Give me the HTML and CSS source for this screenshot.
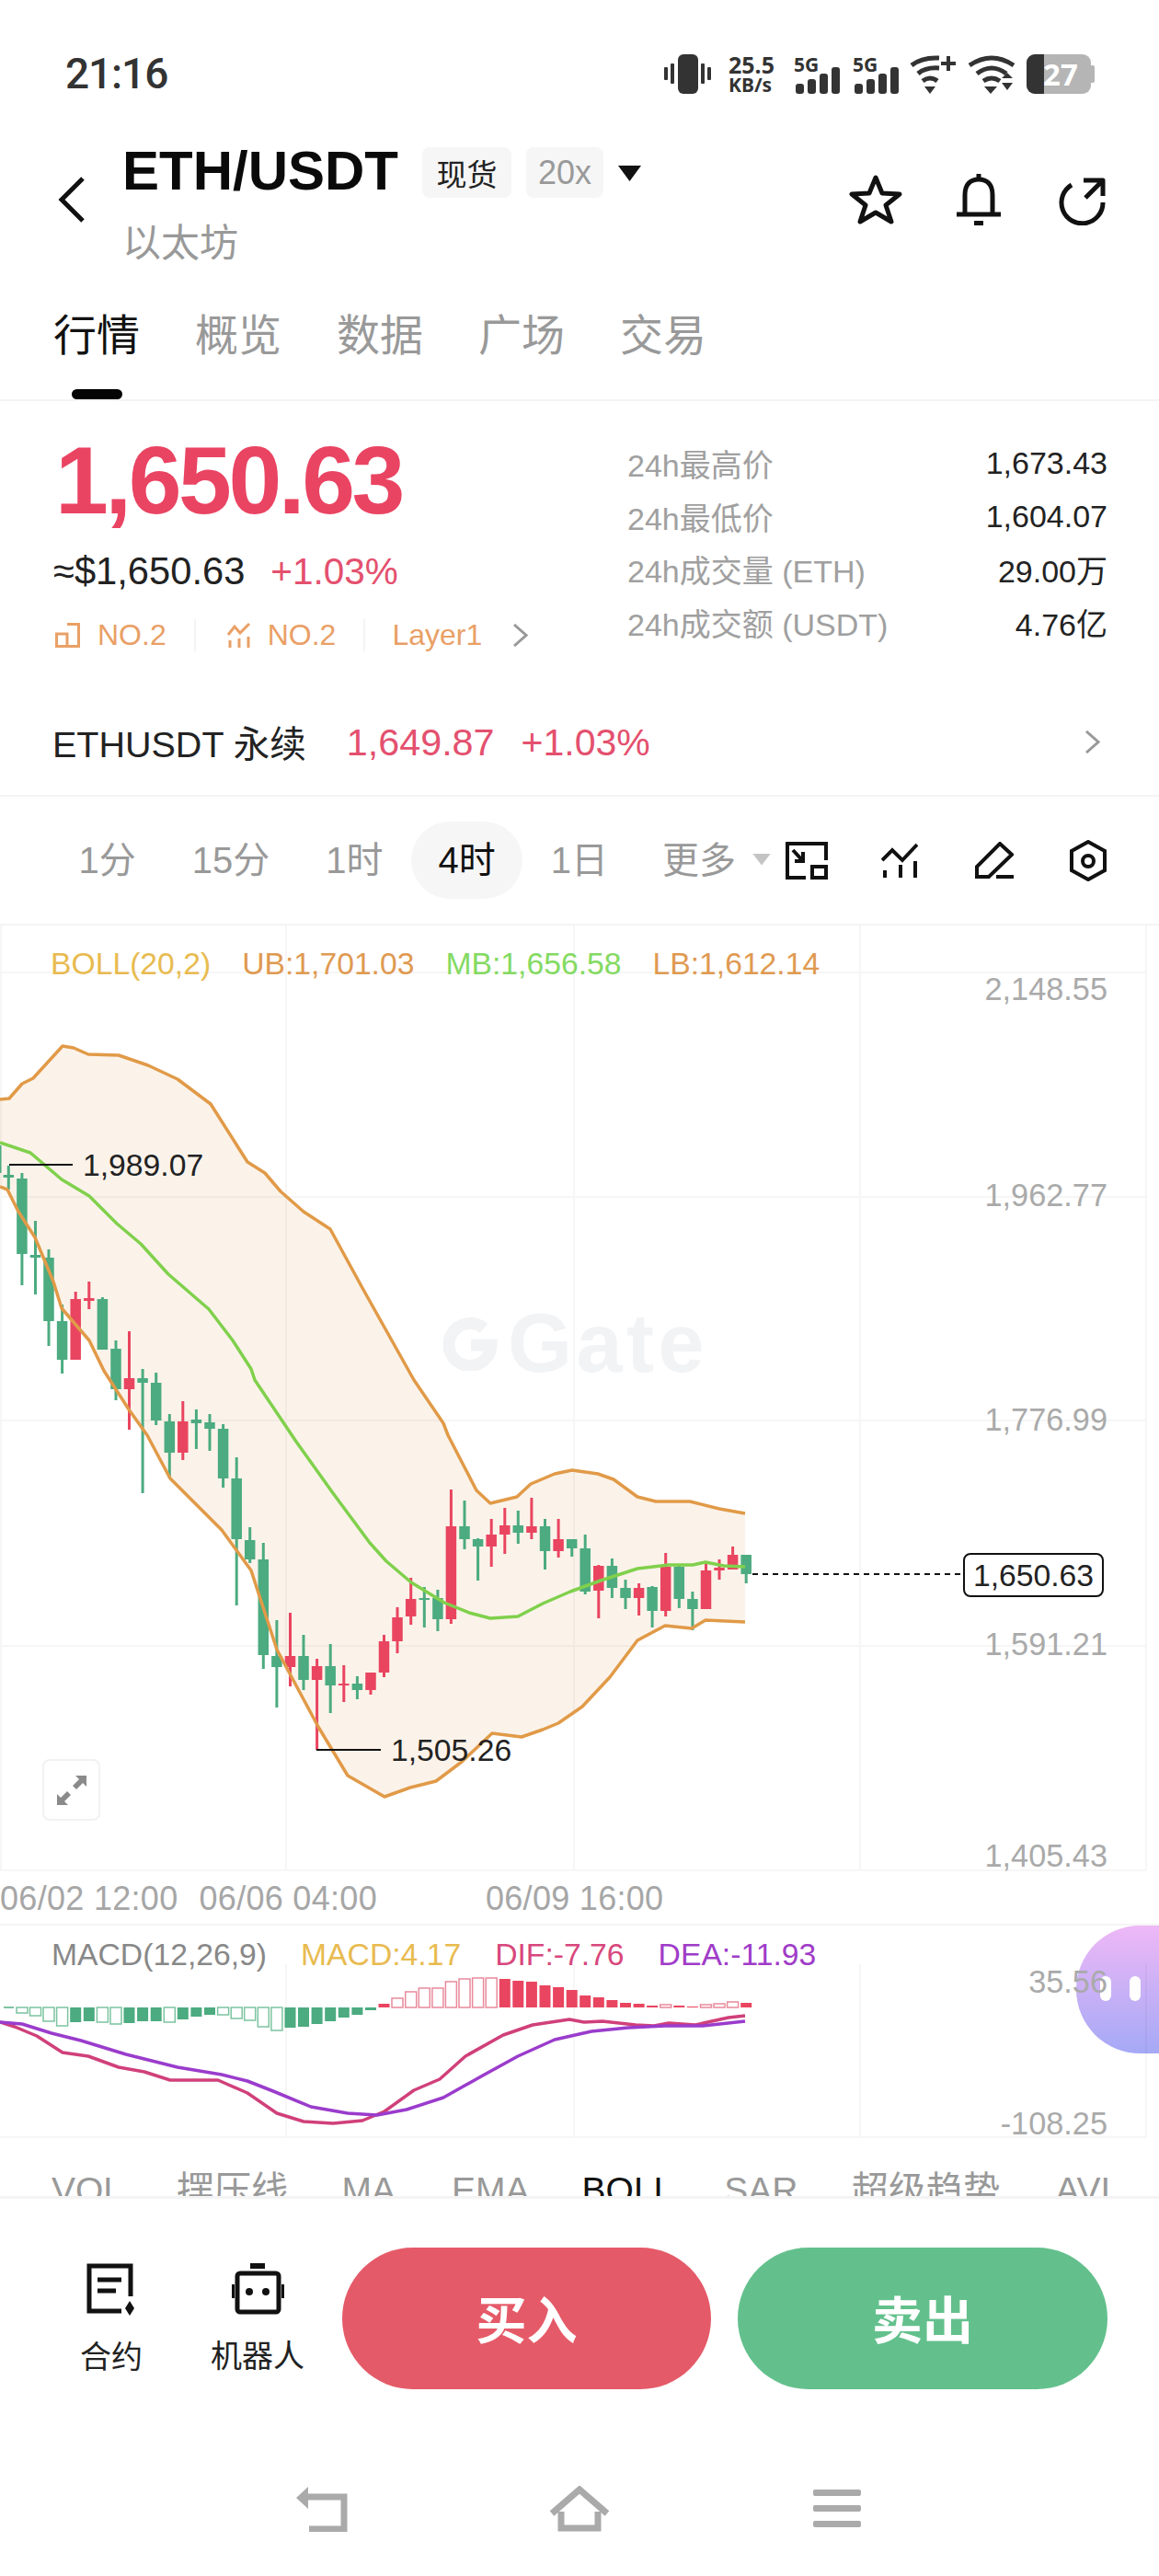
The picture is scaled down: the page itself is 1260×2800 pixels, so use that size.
FILE: index.html
```html
<!DOCTYPE html>
<html lang="zh">
<head>
<meta charset="utf-8">
<title>ETH/USDT</title>
<link rel="stylesheet" href="styles.css">
</head>
<body>
<div class="page">
  <div class="status">
    <div class="time">21:16</div>
    <div class="sys">
      <svg class="s-vib" viewBox="0 0 51 43"><rect x="15" y="0" width="22" height="43" rx="6"/><rect x="0" y="14" width="4" height="14" rx="1"/><rect x="7" y="10" width="4" height="22" rx="1"/><rect x="40" y="10" width="4" height="22" rx="1"/><rect x="47" y="14" width="4" height="14" rx="1"/></svg>
      <div class="speed"><span>25.5</span><span class="speed-u">KB/s</span></div>
      <div class="sig"><span class="t5g">5G</span><svg class="s-sig" viewBox="0 0 50 43"><rect x="2" y="32" width="9" height="11" rx="3"/><rect x="15" y="27" width="9" height="16" rx="3"/><rect x="28" y="21" width="9" height="22" rx="3"/><rect x="41" y="14" width="9" height="29" rx="3"/></svg></div>
      <div class="sig sig2"><span class="t5g">5G</span><svg class="s-sig" viewBox="0 0 50 43"><rect x="2" y="32" width="9" height="11" rx="3"/><rect x="15" y="27" width="9" height="16" rx="3"/><rect x="28" y="21" width="9" height="22" rx="3"/><rect x="41" y="14" width="9" height="29" rx="3"/></svg></div>
      <svg class="s-wifi" viewBox="0 0 50 43"><g class="wf"><path d="M2 12Q13 3 32 4"/><path d="M9 21Q17 14 32 15"/><path d="M14 29Q22 23 30 29"/><path class="wf-thin" d="M42 2V18M34 10H50"/></g><path d="M16 35H28L22 43Z"/></svg>
      <svg class="s-wifi s-wifi2" viewBox="0 0 53 43"><g class="wf"><path d="M2 12Q26 -4 50 12"/><path d="M10 21Q26 9 42 21"/><path d="M17 29Q26 23 35 29"/></g><path d="M18 35H32L25 43Z"/><path d="M37 26H49L43 20ZM37 31H49L43 39Z"/></svg>
      <div class="batt"><i class="batt-d"></i><span class="batt-t">27</span></div>
    </div>
  </div>

  <header class="head">
    <svg class="back" viewBox="0 0 30 50"><path d="M27 2L4 25L27 48"/></svg>
    <div class="title-col">
      <div class="title-row">
        <h1 class="pair">ETH/USDT</h1>
        <span class="tag tag-spot">现货</span>
        <span class="tag tag-lev">20x</span>
        <span class="drop"></span>
      </div>
      <div class="coin">以太坊</div>
    </div>
    <div class="head-ic">
      <svg class="i-star" viewBox="0 0 58 55"><path d="M29 4L36 21L55 22L40 34L46 52L29 42L12 52L18 34L3 22L22 21Z"/></svg>
      <svg class="i-bell" viewBox="0 0 48 57"><path d="M9 44V24C9 12 15 7 24 7C33 7 39 12 39 24V44"/><path d="M24 1V7M0 45H48"/><rect class="fill" x="19" y="52" width="10" height="5"/></svg>
      <svg class="i-share" viewBox="0 0 52 52"><path d="M15 8A22.500 22.500 0 1 0 49 27"/><path d="M28 3H49V20M49 3L30 22"/></svg>
    </div>
  </header>

  <nav class="tabs">
    <span class="tab tab-on">行情</span><span class="tab">概览</span><span class="tab">数据</span><span class="tab">广场</span><span class="tab">交易</span>
  </nav>

  <section class="market">
    <div class="m-left">
      <div class="price">1,650.63</div>
      <div class="usd"><span>≈$1,650.63</span><span class="chg">+1.03%</span></div>
      <div class="ranks">
        <svg class="r-i1" viewBox="0 0 27 27"><path d="M1.500 12H13V25.500H1.500ZM13 1.500H25.500V25.500H13"/></svg>
        <span class="rk rk-1">NO.2</span>
        <i class="rk-div"></i>
        <svg class="r-i2" viewBox="0 0 26 27"><path d="M1 13L8 4L14 11L24 1"/><path d="M3 19V27M13 17V27M23 15V27"/></svg>
        <span class="rk rk-2">NO.2</span>
        <i class="rk-div"></i>
        <span class="rk rk-3">Layer1</span>
        <svg class="r-ch" viewBox="0 0 17 25"><path d="M2 1L15 12.500L2 24"/></svg>
      </div>
    </div>
    <dl class="stats">
      <div class="stat"><dt>24h最高价</dt><dd>1,673.43</dd></div>
      <div class="stat"><dt>24h最低价</dt><dd>1,604.07</dd></div>
      <div class="stat"><dt>24h成交量 (ETH)</dt><dd>29.00万</dd></div>
      <div class="stat"><dt>24h成交额 (USDT)</dt><dd>4.76亿</dd></div>
    </dl>
  </section>

  <section class="perp">
    <span class="p-name">ETHUSDT 永续</span>
    <span class="p-val">1,649.87</span>
    <span class="p-chg">+1.03%</span>
    <svg class="p-ch" viewBox="0 0 17 25"><path d="M2 1L15 12.500L2 24"/></svg>
  </section>

  <section class="tf-bar">
    <span class="tf">1分</span><span class="tf">15分</span><span class="tf">1时</span><span class="tf tf-on">4时</span><span class="tf">1日</span><span class="tf tf-more">更多</span><span class="tf-tri"></span>
    <div class="tf-ic">
      <svg class="ti1" viewBox="0 0 46 41"><path d="M22 39H2V2H44V20"/><path d="M29 27H44V39H29Z"/><path d="M8 9L19 21M19 11V21H10"/></svg>
      <svg class="ti2" viewBox="0 0 40 38"><path d="M1 19L12 8L23 19L39 2"/><path d="M4 30V38M21 24V38M37 20V38"/></svg>
      <svg class="ti3" viewBox="0 0 42 40"><path d="M27 2L40 14L15 38H2V27Z"/><path d="M23 38H42"/></svg>
      <svg class="ti4" viewBox="0 0 40 45"><path d="M20 2L38 12V33L20 43L2 33V12Z"/><circle cx="20" cy="23" r="6"/></svg>
    </div>
  </section>

  <section class="kline">
    <div class="wm"><svg class="wm-i" viewBox="0 0 60 60"><path d="M44 14A23 23 0 1 0 52 32H30"/></svg><span>Gate</span></div>
    <svg class="k-svg" viewBox="0 1006 1260 1029">
      <path class="band" d="M0 1195L10 1194L24 1178L36 1172L68 1137L80 1139L96 1146L129 1147L161 1158L193 1173L229 1200L269 1263L288 1275L305 1295L330 1317L359 1336L394 1400L450 1500L482 1547L487 1560L518 1620L533 1634L562 1627L577 1613L603 1602L622 1598L650 1602L667 1608L693 1627L713 1632L750 1632L782 1640L810 1645L810 1763L768 1762L752 1770L727 1767L695 1782L663 1823L633 1855L607 1873L590 1880L567 1888L535 1884L502 1915L474 1936L446 1943L418 1953L378 1930L346 1877L301 1793L273 1707L241 1663L185 1607L160 1560L140 1532L113 1490L97 1457L67 1422L58 1393L38 1345L20 1317L8 1293L0 1290Z"/>
      <path class="grid" d="M0 1057H1246M0 1301H1246M0 1544H1246M0 1789H1246M0 2033H1246M1 1006V2033M311 1006V2033M624 1006V2033M935 1006V2033M1246 1006V2033"/>
      <path class="g-w" d="M0 1245V1275M9.300 1267V1293M23.900 1275V1397M38.500 1327V1407M53 1358V1463M67.600 1418V1493M111.400 1410V1467M126 1457V1522M155.100 1488V1623M169.700 1492V1549M184.300 1537V1607M213.400 1532V1575M228 1537V1577M242.600 1548V1617M257.200 1584V1745M271.700 1660V1699M286.300 1677V1814M300.900 1761V1856M330 1777V1837M359.200 1787V1862M388.400 1822V1847M461.300 1725V1769M475.900 1728V1773M505 1631V1684M519.600 1672V1718M563.300 1642V1678M592.500 1651V1706M621.700 1673V1692M636.200 1668V1733M665.400 1694V1737M680 1717V1749M709.100 1724V1769M738.300 1700V1748M752.900 1730V1772M811.200 1690V1721"/>
      <path class="g-b" d="M9.300 1277V1280M23.900 1281V1363M38.500 1364V1367M53 1367V1436M67.600 1436V1478M111.400 1412V1467M126 1466V1510M155.100 1498V1503M169.700 1503V1544M184.300 1545V1579M213.400 1543V1547M228 1546V1553M242.600 1553V1607M257.200 1607V1673M271.700 1674V1695M286.300 1695V1799M300.900 1800V1812M330 1800V1826M359.200 1811V1832M388.400 1830V1837M461.300 1737V1739M475.900 1737V1760M505 1659V1673M519.600 1673V1681M563.300 1658V1666M592.500 1659V1686M621.700 1673V1683M636.200 1683V1730M665.400 1702V1726M680 1726V1737M709.100 1725V1751M738.300 1703V1738M752.900 1738V1749M811.200 1690V1711"/>
      <path class="r-w" d="M82.200 1404V1478M96.800 1393V1423M140.500 1447V1554M198.800 1523V1587M315.500 1753V1833M344.600 1803V1902M373.800 1810V1850M403 1818V1842M417.500 1777V1823M432 1747V1797M446.700 1715V1766M490.400 1619V1765M534.200 1651V1703M548.800 1639V1689M577.900 1628V1673M607.100 1651V1693M650.800 1701V1759M694.600 1721V1756M723.700 1688V1757M767.500 1700V1749M782 1695V1717M796.600 1681V1706"/>
      <path class="r-b" d="M82.200 1412V1478M96.800 1411V1414M140.500 1498V1510M198.800 1545V1579M315.500 1800V1812M344.600 1811V1826M373.800 1830V1832M403 1818V1837M417.500 1784V1818M432 1758V1784M446.700 1738V1757M490.400 1659V1760M534.200 1668V1681M548.800 1658V1668M577.900 1659V1666M607.100 1673V1686M650.800 1702V1729M694.600 1726V1737M723.700 1703V1751M767.500 1707V1749M782 1704V1707M796.600 1690V1706"/>
      <polyline class="bb" points="0,1195 10,1194 24,1178 36,1172 68,1137 80,1139 96,1146 129,1147 161,1158 193,1173 229,1200 269,1263 288,1275 305,1295 330,1317 359,1336 394,1400 450,1500 482,1547 487,1560 518,1620 533,1634 562,1627 577,1613 603,1602 622,1598 650,1602 667,1608 693,1627 713,1632 750,1632 782,1640 810,1645"/>
      <polyline class="bb" points="0,1290 8,1293 20,1317 38,1345 58,1393 67,1422 97,1457 113,1490 140,1532 160,1560 185,1607 241,1663 273,1707 301,1793 346,1877 378,1930 418,1953 446,1943 474,1936 502,1915 535,1884 567,1888 590,1880 607,1873 633,1855 663,1823 693,1783 723,1767 752,1770 767,1761 810,1763"/>
      <polyline class="mb" points="0,1242 33,1253 67,1282 97,1300 127,1330 153,1352 183,1385 227,1423 253,1457 273,1488 277,1500 322,1567 362,1623 402,1677 420,1697 447,1720 483,1742 510,1753 533,1759 563,1757 590,1743 620,1730 653,1718 693,1705 727,1701 753,1701 767,1698 787,1702 810,1703"/>
      <path class="mark" d="M10 1266H79M344 1902H414"/>
      <path class="dash" d="M818 1711H1047"/>
    </svg>
    <div class="legend k-legend">
      <span class="lg-boll">BOLL(20,2)</span><span class="lg-ub">UB:1,701.03</span><span class="lg-mb">MB:1,656.58</span><span class="lg-lb">LB:1,612.14</span>
    </div>
    <span class="ax ax-1">2,148.55</span>
    <span class="ax ax-2">1,962.77</span>
    <span class="ax ax-3">1,776.99</span>
    <span class="ax ax-4">1,591.21</span>
    <span class="ax ax-5">1,405.43</span>
    <span class="mk mk-hi">1,989.07</span>
    <span class="mk mk-lo">1,505.26</span>
    <span class="last">1,650.63</span>
    <button class="expand"><svg viewBox="0 0 32 32"><path d="M32 0H20L24 4L17 11L21 15L28 8L32 12ZM0 32H12L8 28L15 21L11 17L4 24L0 20Z"/></svg></button>
  </section>

  <div class="time-axis"><span>06/02 12:00</span><span>06/06 04:00</span><span>06/09 16:00</span></div>

  <section class="macd">
    <div class="bubble"><i></i><i></i></div>
    <svg class="m-svg" viewBox="0 2093 1260 232">
      <path class="grid" d="M0 2323H1246M311 2135V2323M624 2135V2323M935 2135V2323M1246 2135V2323"/>
      <path class="h-gl" d="M4 2182H15"/>
      <path class="h-gh" d="M18 2182h12v6h-12zM32.500 2182h12v9h-12zM47 2182h12v15h-12zM61.600 2182h12v20h-12zM105.400 2182h12v16h-12zM120 2182h12v18h-12zM178.300 2182h12v16h-12zM236.600 2182h12v8h-12zM251.200 2182h12v12h-12zM265.700 2182h12v14h-12zM280.300 2182h12v21h-12zM294.900 2182h12v25h-12z"/>
      <path class="h-gs" d="M76.200 2182h12v16h-12zM90.800 2182h12v15h-12zM134.500 2182h12v17h-12zM149.100 2182h12v15h-12zM163.700 2182h12v15h-12zM192.800 2182h12v13h-12zM207.400 2182h12v10h-12zM222 2182h12v8h-12zM309.500 2182h12v22h-12zM324 2182h12v21h-12zM338.600 2182h12v18h-12zM353.200 2182h12v15h-12zM367.800 2182h12v11h-12zM382.400 2182h12v8h-12zM397 2182h12v3h-12z"/>
      <path class="h-rs" d="M411.500 2178h12v4h-12zM542.800 2151h12v31h-12zM557.300 2153h12v29h-12zM571.900 2154h12v28h-12zM586.500 2158h12v24h-12zM601.100 2160h12v22h-12zM615.700 2163h12v19h-12zM630.200 2169h12v13h-12zM644.800 2171h12v11h-12zM659.400 2174h12v8h-12zM674 2177h12v5h-12zM688.600 2178h12v4h-12zM703.100 2180h12v2h-12zM732.300 2180h12v2h-12zM746.900 2181h12v1h-12zM805.200 2177h12v5h-12z"/>
      <path class="h-rh" d="M426 2172h12v10h-12zM440.700 2165h12v17h-12zM455.300 2161h12v21h-12zM469.900 2161h12v21h-12zM484.400 2154h12v28h-12zM499 2151h12v31h-12zM513.600 2150h12v32h-12zM528.200 2150h12v32h-12zM717.700 2179h12v3h-12zM761.500 2179h12v3h-12zM776 2178h12v4h-12zM790.600 2176h12v6h-12z"/>
      <polyline class="dif" points="0,2198 16,2203 40,2213 68,2231 96,2235 129,2247 157,2252 185,2261 237,2261 269,2275 301,2297 330,2306 362,2308 394,2305 418,2295 450,2272 478,2260 506,2235 547,2212 579,2201 619,2195 635,2198 655,2197 691,2201 711,2202 727,2199 756,2201 792,2193 810,2191"/>
      <polyline class="dea" points="0,2198 24,2200 56,2210 88,2218 137,2233 193,2247 241,2255 269,2262 297,2273 338,2290 378,2297 410,2299 442,2293 482,2280 523,2257 563,2235 603,2217 643,2208 683,2204 723,2202 764,2202 810,2197"/>
    </svg>
    <div class="legend m-legend">
      <span class="lg-macd">MACD(12,26,9)</span><span class="lg-m">MACD:4.17</span><span class="lg-dif">DIF:-7.76</span><span class="lg-dea">DEA:-11.93</span>
    </div>
    <span class="ax ax-m1">35.56</span>
    <span class="ax ax-m2">-108.25</span>
  </section>

  <div class="ind-wrap">
    <div class="inds">
      <span>VOL</span><span class="ind-cjk">摆压线</span><span>MA</span><span class="ind-ema">EMA</span><span class="ind-on">BOLL</span><span>SAR</span><span class="ind-cjk">超级趋势</span><span class="ind-avl">AVL</span>
    </div>
  </div>

  <footer class="foot">
    <div class="actions">
      <div class="tool tool-1">
        <svg class="t-doc" viewBox="0 0 54 57"><path d="M48 36V3H3V52H38"/><path d="M12 18H38M12 30H32"/><path class="fill" d="M47 41L52 49L47 57L42 49Z"/></svg>
        <span>合约</span>
      </div>
      <div class="tool tool-2">
        <svg class="t-bot" viewBox="0 0 57 56"><rect x="6" y="11" width="45" height="42" rx="3"/><path class="fill" d="M20 0H36V6H20ZM0 23H3V38H0ZM54 23H57V38H54Z"/><circle class="fill" cx="19" cy="31" r="4"/><circle class="fill" cx="37" cy="31" r="4"/></svg>
        <span>机器人</span>
      </div>
      <button class="trade buy">买入</button>
      <button class="trade sell">卖出</button>
    </div>
    <div class="sysnav">
      <svg class="n-back" viewBox="0 0 56 49"><path class="n-fill" d="M0 12L13 0V24Z"/><path d="M10 11H52V46H14"/></svg>
      <svg class="n-home" viewBox="0 0 66 50"><path d="M3 30L33 4L63 30"/><path d="M13 28V46H53V28"/></svg>
      <div class="n-menu"><i></i><i></i><i></i></div>
    </div>
  </footer>
</div>
</body>
</html>
```
FILE: styles.css
```css
* { box-sizing: border-box; }
html, body { margin: 0; padding: 0; background: #fff; }
body { font-family: "Liberation Sans", "Noto Sans CJK SC", sans-serif; color: #222; }
.page { width: 1260px; height: 2800px; overflow: hidden; background: #fff; }
svg { display: block; fill: none; }

/* status bar */
.status { height: 120px; padding: 58px 70px 0 71px; display: flex; justify-content: space-between; align-items: flex-start; }
.time { font: 500 46px/44px Roboto, sans-serif; color: #333; letter-spacing: -1.100px; }
.sys { display: flex; align-items: flex-start; height: 44px; }
.sys svg { height: 43px; fill: #333; margin-top: 1px; }
.s-vib { width: 51px; }
.speed { width: 52px; margin-left: 19px; display: flex; flex-direction: column; font: 700 25px/24px "Noto Sans", sans-serif; color: #333; white-space: nowrap; }
.speed-u { font-size: 21px; line-height: 20px; }
.sig { position: relative; width: 50px; height: 44px; margin-left: 19px; }
.sig2 { margin-left: 14px; }
.s-sig { width: 50px; }
.t5g { position: absolute; left: 0; top: 2px; font: 700 21px/20px "Noto Sans", sans-serif; color: #333; }
.s-wifi { width: 50px; margin-left: 12px; }
.s-wifi2 { width: 53px; margin-left: 13px; }
.wf path { stroke: #333; stroke-width: 5; fill: none; }
.wf .wf-thin { stroke-width: 4; }
.batt { position: relative; width: 70px; height: 43px; margin: 1px 4px 0 11px; border-radius: 9px; background: #b5b5b5; display: flex; overflow: visible; }
.batt::after { content: ""; position: absolute; left: 69px; top: 12px; width: 5px; height: 19px; border-radius: 2px; background: #b5b5b5; }
.batt-d { width: 19px; height: 43px; border-radius: 9px 0 0 9px; background: #333; }
.batt-t { margin-left: -1px; font: 700 33px/43px "Noto Sans", sans-serif; color: #fff; }

/* header */
.head { height: 180px; display: flex; align-items: flex-start; padding: 0 58px 0 63px; }
.back { width: 30px; height: 50px; margin: 72px 40px 0 0; stroke: #111; stroke-width: 5; }
.title-col { display: flex; flex-direction: column; padding-top: 40px; }
.title-row { display: flex; align-items: center; height: 55px; }
.pair { margin: -5px 26px 0 0; font: 700 60px/55px "Liberation Sans", sans-serif; color: #0a0a0a; }
.tag { height: 55px; border-radius: 8px; background: #f6f6f6; display: flex; align-items: center; justify-content: center; }
.tag-spot { width: 97px; font-size: 33px; color: #222; margin-right: 16px; }
.tag-lev { width: 84px; font-size: 36px; color: #999; margin-right: 16px; }
.drop { width: 25px; height: 17px; margin-top: 2px; background: #111; clip-path: polygon(0 0, 100% 0, 50% 100%); }
.coin { margin-top: 28px; font-size: 42px; line-height: 44px; color: #999; }
.head-ic { margin-left: auto; margin-top: 68px; display: flex; align-items: flex-start; }
.head-ic svg { stroke: #111; stroke-width: 5; stroke-linejoin: round; }
.head-ic .fill { fill: #111; stroke: none; }
.i-star { width: 58px; height: 55px; margin-top: 1px; }
.i-bell { width: 48px; height: 57px; margin-left: 59px; }
.i-share { width: 52px; height: 52px; margin-left: 62px; margin-top: 5px; }

/* tabs */
.tabs { height: 136px; padding: 40px 0 0 58px; display: flex; gap: 60px; border-bottom: 2px solid #f4f4f4; }
.tab { font-size: 47px; line-height: 50px; color: #999; }
.tab-on { color: #111; }
.tab-on::after { content: ""; display: block; width: 55px; height: 11px; margin: 33px auto 0; background: #050505; border-radius: 6px; }

/* market */
.market { display: flex; padding: 41px 56px 42px 58px; height: 314px; }
.m-left { width: 624px; }
.price { height: 90px; font: 700 104px/90px "Liberation Sans", sans-serif; letter-spacing: -3.500px; color: #ea4463; margin-left: 2px; }
.usd { margin-top: 30px; display: flex; gap: 28px; font-size: 41.700px; line-height: 48px; color: #222; }
.chg { color: #e4506e; font-size: 40.500px; }
.ranks { margin-top: 27px; height: 36px; display: flex; align-items: center; color: #e9a066; font-size: 32px; }
.ranks svg { stroke: #e9a066; stroke-width: 3; }
.r-i1 { width: 27px; height: 27px; margin-left: 2px; }
.rk-1 { margin-left: 19px; }
.rk-div { width: 2px; height: 35px; background: #f4f4f4; margin: 0 34px 0 30px; }
.r-i2 { width: 26px; height: 27px; }
.rk-2 { margin-left: 18px; }
.rk-3 { margin-left: -5px; }
.r-ch { width: 17px; height: 25px; margin-left: 33px; }
.ranks .r-ch { stroke: #999; }
.stats { flex: 1; margin: -2px 0 0; display: grid; grid-auto-rows: 57.500px; }
.stat { display: flex; justify-content: space-between; align-items: center; font-size: 34px; }
.stat dt { color: #a0a0a0; }
.stat dd { margin: 0; color: #222; }

/* perp */
.perp { height: 116px; display: flex; align-items: center; padding: 0 64px 1px 57px; border-bottom: 2px solid #f4f4f4; }
.p-name { color: #222; font-size: 39.500px; margin-top: -2px; }
.p-val { margin-left: 44px; color: #e4506e; font-size: 41.300px; margin-top: 1px; }
.p-chg { margin-left: 29px; color: #e4506e; font-size: 41px; margin-top: 1px; }
.p-ch { width: 17px; height: 25px; margin-left: auto; stroke: #999; stroke-width: 3; }

/* timeframe */
.tf-bar { height: 140px; display: flex; align-items: center; padding: 0 57px 0 55px; border-bottom: 2px solid #f4f4f4; font-size: 40px; color: #999; }
.tf { padding: 0 30.500px; line-height: 84px; }
.tf-on { height: 84px; padding: 0 29.500px; border-radius: 42px; background: #f6f6f6; color: #111; }
.tf-more { margin-left: -2px; padding-right: 22px; }
.tf-tri { width: 20px; height: 13px; margin-top: -2px; margin-left: -4px; background: #c4c4c4; clip-path: polygon(0 0, 100% 0, 50% 100%); }
.tf-ic { margin-left: auto; display: flex; align-items: center; }
.tf-ic svg { stroke: #111; stroke-width: 4; }
.ti1 { width: 46px; height: 41px; }
.ti2 { width: 40px; height: 38px; margin-left: 58px; }
.ti3 { width: 42px; height: 40px; margin-left: 62px; }
.ti4 { width: 40px; height: 45px; margin-left: 61px; }

/* kline */
.kline { position: relative; height: 1029px; }
.k-svg { position: absolute; left: 0; top: 0; width: 1260px; height: 1029px; }
.m-svg { position: absolute; left: 0; top: 0; width: 1260px; height: 232px; }
.wm { position: absolute; left: 482px; top: 419px; height: 70px; display: flex; align-items: center; gap: 10px; font: 700 90px/70px "Liberation Sans", sans-serif; letter-spacing: 4.500px; color: #f2f3f5; }
.wm-i { width: 60px; height: 60px; stroke: #f2f3f5; stroke-width: 13; }
.band { fill: #fbf3ea; }
.grid { stroke: rgba(0, 0, 0, .035); stroke-width: 2; }
.g-w { stroke: #4cab80; stroke-width: 3; }
.g-b { stroke: #4cab80; stroke-width: 11.500; }
.r-w { stroke: #e94560; stroke-width: 3; }
.r-b { stroke: #e94560; stroke-width: 11.500; }
.bb { fill: none; stroke: #e19a48; stroke-width: 3.500; stroke-linejoin: round; }
.mb { fill: none; stroke: #80d04c; stroke-width: 3.500; stroke-linejoin: round; }
.mark { stroke: #111; stroke-width: 2; }
.dash { stroke: #111; stroke-width: 2; stroke-dasharray: 6 5; }
.legend { position: relative; display: flex; font-size: 33.700px; line-height: 40px; padding-left: 55px; }
.k-legend { padding-top: 21px; gap: 34px; }
.lg-boll { color: #e8bb50; }
.lg-ub, .lg-lb { color: #df9a52; }
.lg-mb { color: #84da62; }
.ax { position: absolute; right: 56px; font-size: 34.300px; line-height: 40px; color: #aaa; }
.ax-1 { top: 49px; }
.ax-2 { top: 273px; }
.ax-3 { top: 517px; }
.ax-4 { top: 761px; }
.ax-5 { top: 991px; }
.mk { position: absolute; font-size: 33.700px; line-height: 40px; color: #222; }
.mk-hi { left: 90px; top: 240px; }
.mk-lo { left: 425px; top: 876px; }
.last { position: absolute; left: 1047px; top: 682px; width: 153px; height: 48px; border: 2px solid #111; border-radius: 8px; background: #fff; font-size: 33.700px; line-height: 44px; text-align: center; color: #222; }
.expand { position: absolute; left: 46px; top: 906px; width: 63px; height: 67px; padding: 0; border: 2px solid #f2f2f2; border-radius: 8px; background: #fff; display: flex; align-items: center; justify-content: center; }
.expand svg { width: 32px; height: 32px; fill: #8a8a8a; }

/* time axis */
.time-axis { height: 58px; display: flex; align-items: center; border-bottom: 2px solid #f4f4f4; padding-top: 2px; font-size: 36px; letter-spacing: .3px; color: #a6a6a6; white-space: nowrap; }
.time-axis span:nth-child(2) { margin-left: 23px; }
.time-axis span:nth-child(3) { margin-left: 118px; }

/* macd */
.macd { position: relative; height: 232px; }
.m-legend { padding-top: 11px; padding-left: 56px; }
.m-legend span { margin-right: 37px; }
.lg-macd { color: #888; }
.lg-m { color: #e8bb50; }
.lg-dif { color: #d8477c; }
.lg-dea { color: #a03cc8; }
.h-gl { stroke: #7fc4a2; stroke-width: 2; }
.h-gh { fill: #fff; stroke: #7cc4a0; stroke-width: 1.500; }
.h-gs { fill: #4cab80; }
.h-rs { fill: #e94560; }
.h-rh { fill: #fff; stroke: #e88a9c; stroke-width: 1.500; }
.dif { fill: none; stroke: #d0407a; stroke-width: 3.500; stroke-linejoin: round; }
.dea { fill: none; stroke: #9a3ccc; stroke-width: 3.500; stroke-linejoin: round; }
.ax-m1 { top: 41px; }
.ax-m2 { top: 195px; }
.bubble { position: absolute; right: 0; top: 0; width: 90px; height: 139px; padding: 55px 0 0 26px; display: flex; gap: 20px; border-radius: 70px 0 0 70px; background: linear-gradient(180deg, #eeb8f6, #a5a9f6); }
.bubble i { width: 12px; height: 27px; border-radius: 6px; background: #fff; }

/* indicator tabs */
.ind-wrap { height: 65px; border-bottom: 3px solid #f4f4f4; overflow: hidden; }
.inds { width: 1205px; height: 62px; overflow: hidden; padding: 36px 0 0 56px; display: flex; gap: 58px; font-size: 39px; line-height: 40px; color: #999; white-space: nowrap; }
.ind-cjk { font-size: 40.500px; }
.ind-ema { margin-left: 3px; }
.ind-avl { margin-left: 2px; }
.ind-on { color: #111; margin-left: -1px; margin-right: -3px; }

/* footer */
.foot { height: 410px; }
.actions { display: flex; align-items: flex-start; padding: 53px 0 0 87px; }
.tool { display: flex; flex-direction: column; align-items: center; padding-top: 17px; font-size: 34px; line-height: 40px; color: #222; }
.tool svg { stroke: #111; stroke-width: 5; margin-bottom: 25px; }
.tool .fill { fill: #111; stroke: none; }
.tool-1 { width: 68px; }
.tool-2 { width: 102px; margin-left: 74px; margin-right: 41px; }
.t-doc { width: 54px; height: 57px; }
.t-bot { width: 57px; height: 56px; }
.trade { width: 401px; height: 154px; padding: 0 0 4px; border: 0; border-radius: 77px; color: #fff; font: 700 55px "Liberation Sans", "Noto Sans CJK SC", sans-serif; }
.buy { background: #e55a68; }
.sell { margin-left: 29px; width: 402px; background: #63c08c; }
.sysnav { display: flex; align-items: flex-start; margin-top: 106px; padding-left: 322px; }
.sysnav svg { stroke: #aaa; stroke-width: 7; }
.n-back { width: 56px; height: 49px; }
.n-back .n-fill { fill: #aaa; stroke: none; }
.n-home { width: 66px; height: 50px; margin-left: 219px; margin-top: -1px; }
.n-menu { width: 52px; margin-left: 221px; margin-top: 3px; display: flex; flex-direction: column; gap: 10px; }
.n-menu i { height: 7px; border-radius: 2px; background: #aaa; }
```
